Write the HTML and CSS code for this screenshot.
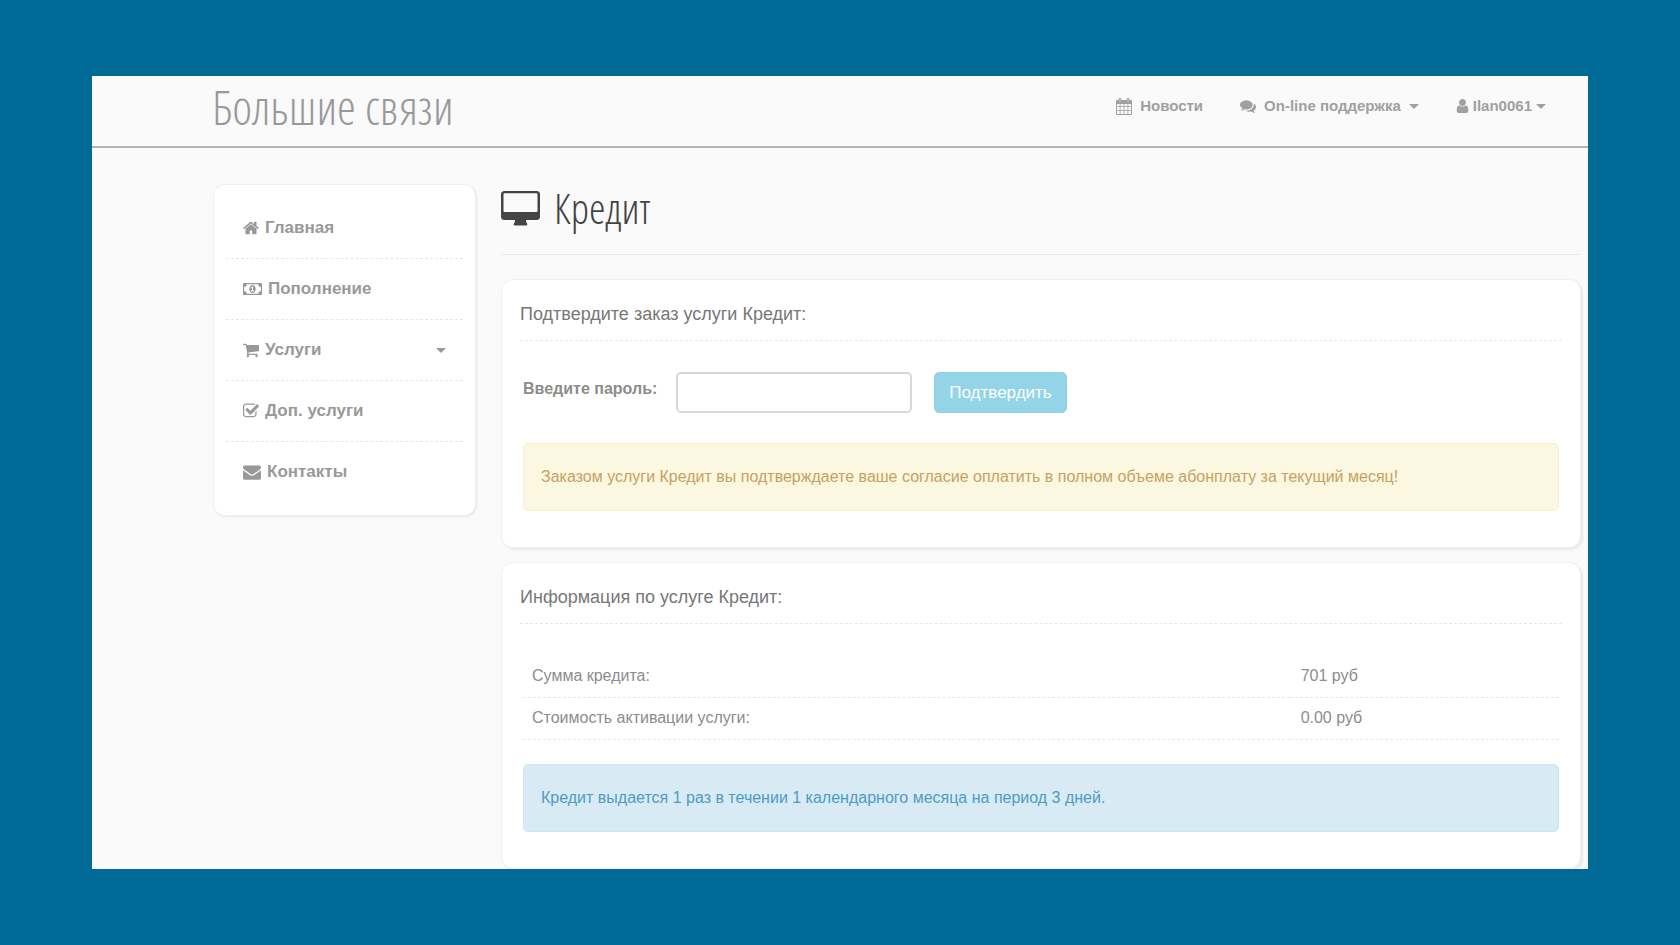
FILE: index.html
```html
<!DOCTYPE html>
<html lang="ru">
<head>
<meta charset="utf-8">
<title>Большие связи — Кредит</title>
<link rel="stylesheet" href="styles.css">
</head>
<body>
<div class="page">
  <header class="header">
    <a class="brand" href="#">Большие связи</a>
    <nav class="topnav">
      <a class="toplink" href="#">
        <svg class="icon icon-news" viewBox="0 0 16 18"><path fill-rule="evenodd" d="M1 3h14q1 0 1 1v13q0 1-1 1H1q-1 0-1-1V4q0-1 1-1zM1 7v2.200h2.700V7zM4.500 7v2.200h3.100V7zM8.400 7v2.200h3.100V7zM12.300 7v2.200H15V7zM1 10v3h2.700v-3zM4.500 10v3h3.100v-3zM8.400 10v3h3.100v-3zM12.300 10v3H15v-3zM1 13.800V17h2.700v-3.200zM4.500 13.800V17h3.100v-3.200zM8.400 13.800V17h3.100v-3.200zM12.300 13.800V17H15v-3.200z"/><rect x="2.700" y="1" width="2.600" height="4.400" rx="1"/><rect x="10.700" y="1" width="2.600" height="4.400" rx="1"/><path class="paper" d="M3.700 2h.6v2.600h-.6zM11.700 2h.6v2.600h-.6z"/></svg>
        <span>Новости</span>
      </a>
      <a class="toplink" href="#">
        <svg class="icon" viewBox="0 0 1792 1792"><path d="M1408 768q0 139-94 257t-256.500 186.500-353.500 68.500q-86 0-176-16-124 88-278 128-36 9-86 16h-3q-11 0-20.500-8t-11.500-21q-1-3-1-6.500t.5-6.500 2-6l2.500-5 3.500-5.500 4-5 4.500-5 4-4.500q5-6 23-25t26-29.500 22.500-29 25-38.500 20.500-44q-124-72-195-177t-71-224q0-139 94-257t256.500-186.500 353.500-68.500 353.500 68.500 256.500 186.500 94 257zm384 256q0 120-71 224.500t-195 176.500q10 24 20.500 44t25 38.500 22.500 29 26 29.500 23 25q1 1 4 4.500t4.500 5 4 5 3.500 5.500l2.500 5 2 6 .5 6.500-1 6.500q-3 14-13 22t-22 7q-50-7-86-16-154-40-278-128-90 16-176 16-271 0-472-132 58 4 88 4 161 0 309-45t264-129q125-92 192-212t67-254q0-77-23-152 129 71 204 178t75 230z"/></svg>
        <span>On-line поддержка</span>
        <i class="caret"></i>
      </a>
      <a class="toplink toplink-user" href="#">
        <svg class="icon icon-user" viewBox="192 128 1408 1536"><path d="M1536 1399q0 109-62.500 187t-150.500 78h-854q-88 0-150.500-78t-62.500-187q0-85 8.500-160.500t31.500-152 58.500-131 94-89 134.500-34.500q131 128 313 128t313-128q76 0 134.500 34.500t94 89 58.500 131 31.500 152 8.500 160.500zm-256-887q0 159-112.500 271.500t-271.500 112.500-271.500-112.500-112.500-271.500 112.500-271.500 271.500-112.500 271.500 112.500 112.500 271.500z"/></svg>
        <span>Ilan0061</span>
        <i class="caret"></i>
      </a>
    </nav>
  </header>

  <div class="layout">
    <nav class="sidebar">
      <a class="side-item" href="#">
        <svg class="icon" viewBox="64 0 1664 1792"><path d="M1472 992v480q0 26-19 45t-45 19h-384v-384h-256v384h-384q-26 0-45-19t-19-45v-480q0-1 .5-3t.5-3l575-474 575 474q1 2 1 6zm223-69l-62 74q-8 9-21 11h-3q-13 0-21-7l-692-577-692 577q-12 8-24 7-13-2-21-11l-62-74q-8-10-7-23.500t11-21.500l719-599q32-26 76-26t76 26l244 204v-195q0-14 9-23t23-9h192q14 0 23 9t9 23v408l219 182q10 8 11 21.500t-7 23.500z"/></svg>
        <span>Главная</span>
      </a>
      <a class="side-item" href="#">
        <svg class="icon icon-money" viewBox="0 0 19 18"><path fill-rule="evenodd" d="M.5 3h18q.5 0 .5.500v11q0 .5-.5.500H.5q-.5 0-.5-.5v-11Q0 3 .5 3zM3.800 4.200A2.600 2.600 0 0 1 1.200 6.800v4.400a2.600 2.600 0 0 1 2.600 2.600h11.400a2.600 2.600 0 0 1 2.600-2.600V6.800a2.600 2.600 0 0 1-2.600-2.600zM9.500 5c1.900 0 3.200 1.800 3.200 4s-1.300 4-3.200 4-3.200-1.800-3.200-4 1.300-4 3.200-4zm.5 1.600h-.9L7.700 7.800l.6.700.8-.6v2.600H8v1h3.200v-1H10z"/></svg>
        <span>Пополнение</span>
      </a>
      <a class="side-item" href="#">
        <svg class="icon" viewBox="64 0 1664 1792"><path d="M704 1536q0 52-38 90t-90 38-90-38-38-90 38-90 90-38 90 38 38 90zm896 0q0 52-38 90t-90 38-90-38-38-90 38-90 90-38 90 38 38 90zm128-1088v512q0 24-16.500 42.500t-40.500 21.500l-1044 122q13 60 13 70 0 16-24 64h920q26 0 45 19t19 45-19 45-45 19h-1024q-26 0-45-19t-19-45q0-11 8-31.500t16-36 21.500-40 15.500-29.500l-177-823h-204q-26 0-45-19t-19-45 19-45 45-19h256q16 0 28.500 6.500t19.500 15.500 13 24.500 8 26 5.500 29.500 4.500 26h1201q26 0 45 19t19 45z"/></svg>
        <span>Услуги</span>
        <i class="caret caret-side"></i>
      </a>
      <a class="side-item" href="#">
        <svg class="icon" viewBox="64 0 1664 1792"><path d="M1472 930v318q0 119-84.500 203.500t-203.500 84.500h-832q-119 0-203.500-84.500t-84.500-203.500v-832q0-119 84.500-203.500t203.500-84.500h832q63 0 117 25 15 7 18 23 3 17-9 29l-49 49q-10 10-23 10-3 0-9-2-23-6-45-6h-832q-66 0-113 47t-47 113v832q0 66 47 113t113 47h832q66 0 113-47t47-113v-254q0-13 9-22l64-64q10-10 23-10 6 0 12 3 20 8 20 29zm231-489l-814 814q-24 24-57 24t-57-24l-430-430q-24-24-24-57t24-57l110-110q24-24 57-24t57 24l263 263 647-647q24-24 57-24t57 24l110 110q24 24 24 57t-24 57z"/></svg>
        <span>Доп. услуги</span>
      </a>
      <a class="side-item" href="#">
        <svg class="icon icon-mail" viewBox="0 0 1792 1792"><path d="M1792 710v794q0 66-47 113t-113 47h-1472q-66 0-113-47t-47-113v-794q44 49 101 87 362 246 497 345 57 42 92.500 65.500t94.500 48 110 24.500h2q51 0 110-24.500t94.500-48 92.500-65.500q170-123 498-345 57-39 100-87zm0-294q0 79-49 151t-122 123q-376 261-468 325-10 7-42.500 31t-54 38.500-52 32.500-57.500 27-50 9h-2q-23 0-50-9t-57.500-27-52-32.500-54-38.500-42.500-31q-91-64-262-182.500t-205-142.500q-62-42-117-115.500t-55-136.500q0-78 41.500-130t118.500-52h1472q65 0 112.500 47t47.500 113z"/></svg>
        <span>Контакты</span>
      </a>
    </nav>

    <main class="main">
      <h1 class="title">
        <svg class="icon-desktop" viewBox="0 0 39 35"><path fill-rule="evenodd" d="M3.500 0h32Q39 0 39 3.500v22q0 3.500-3.500 3.500H25q0 2 1 3.500t-1 2H14q-2-.5-1-2t1-3.500H3.500Q0 29 0 25.500v-22Q0 0 3.500 0zm0 2.200q-1 0-1 1.300V20q0 1 1 1h32q1 0 1-1V3.500q0-1.300-1-1.300z"/></svg>
        <span>Кредит</span>
      </h1>

      <section class="panel">
        <h2 class="panel-title">Подтвердите заказ услуги Кредит:</h2>
        <div class="panel-body">
          <form class="form">
            <label class="form-label" for="password">Введите пароль:</label>
            <input class="form-input" id="password" type="password">
            <button class="form-button" type="button">Подтвердить</button>
          </form>
          <p class="alert alert-warning">Заказом услуги Кредит вы подтверждаете ваше согласие оплатить в полном объеме абонплату за текущий месяц!</p>
        </div>
      </section>

      <section class="panel">
        <h2 class="panel-title">Информация по услуге Кредит:</h2>
        <div class="panel-body">
          <table class="info">
            <tbody>
              <tr><td class="info-name">Сумма кредита:</td><td>701 руб</td></tr>
              <tr><td class="info-name">Стоимость активации услуги:</td><td>0.00 руб</td></tr>
            </tbody>
          </table>
          <p class="alert alert-info">Кредит выдается 1 раз в течении 1 календарного месяца на период 3 дней.</p>
        </div>
      </section>
    </main>
  </div>
</div>
</body>
</html>
```
FILE: styles.css
```css
* { box-sizing: border-box; }

body {
  margin: 0;
  min-height: 100vh;
  padding: 76px 92px;
  background: #006b96;
  color: #8c8c8c;
  font: 16px/22px "Liberation Sans", Arial, sans-serif;
}

a { color: #999; text-decoration: none; }

.page { background: #fafafa; }

.header {
  display: flex;
  justify-content: space-between;
  height: 72px;
  padding: 0 42px 0 120px;
  border-bottom: 2px solid #b4b4b4;
}

.brand {
  font: 300 48px/62px "Open Sans Condensed Light", "Open Sans CondLight", "Liberation Sans Narrow", sans-serif;
  color: #999;
}

.topnav { display: flex; gap: 37px; padding-top: 19px; }
.toplink {
  display: flex;
  align-items: center;
  gap: 8px;
  height: 22px;
  color: #a0a0a0;
  font-size: 15px;
  font-weight: bold;
}
.toplink-user { gap: 4px; }

.icon { flex: none; width: 16px; height: 18px; fill: currentColor; }
.icon-user { width: 13px; height: 14px; }
.icon-money { width: 19px; }
.icon-mail { width: 18px; height: 18px; }
.paper { fill: #fafafa; }

.caret {
  border: 5px solid transparent;
  border-top-color: currentColor;
  border-bottom-width: 0;
}
.caret-side { margin-left: auto; }

.layout {
  display: grid;
  grid-template-columns: 263px 1fr;
  align-items: start;
  gap: 25px;
  padding: 36px 7px 0 121px;
  overflow: hidden;
}

.sidebar {
  padding: 12px 12px 13px;
  border: 1px solid #f0f0f0;
  border-radius: 12px;
  background: #fff;
  box-shadow: 1px 1px 2px #e8e8e8;
}
.side-item {
  display: flex;
  align-items: center;
  gap: 6px;
  height: 61px;
  padding: 0 17px;
  font-size: 17px;
  font-weight: bold;
}
.side-item + .side-item { border-top: 1px dashed #e8e8e8; }

.title {
  display: flex;
  align-items: center;
  gap: 14px;
  height: 71px;
  margin: 0 0 24px;
  padding-bottom: 22px;
  border-bottom: 1px solid #eaeaea;
  color: #444;
  font: 300 42px/48px "Open Sans Condensed Light", "Open Sans CondLight", "Liberation Sans Narrow", sans-serif;
}
.icon-desktop { width: 39px; height: 35px; fill: currentColor; }

.panel {
  margin-bottom: 14px;
  padding: 0 18px 36px;
  border: 1px solid #f0f0f0;
  border-radius: 12px;
  background: #fff;
  box-shadow: 2px 2px 2px #eaeaea;
}
.panel:last-child { margin-bottom: 0; }

.panel-title {
  height: 61px;
  margin: 0;
  padding-top: 23px;
  border-bottom: 1px dashed #e8e8e8;
  color: #777;
  font-size: 18px;
  font-weight: normal;
}
.panel-body { padding: 31px 3px 0; }

.form { display: flex; }
.form-label { padding-top: 6px; font-weight: bold; }
.form-input {
  width: 236px;
  height: 41px;
  margin: 0 22px 0 19px;
  padding: 0 12px;
  border: 2px solid #d8d8d8;
  border-radius: 5px;
  background: #fff;
  font: inherit;
}
.form-button {
  height: 41px;
  padding: 0 14px;
  border: 1px solid #8dd3e6;
  border-radius: 5px;
  background: #93d4e7;
  color: #fff;
  font: inherit;
  font-size: 17px;
}

.alert {
  margin: 30px 0 0;
  padding: 22px 17px;
  border: 1px solid;
  border-radius: 5px;
}
.alert-warning { border-color: #faeed0; background: #fcf7e1; color: #c7a25e; }
.alert-info { margin-top: 24px; border-color: #c5eaf3; background: #d8ebf5; color: #4f9bc0; }

.info { width: 100%; border-collapse: collapse; }
.info td { height: 42px; padding: 0 11px; border-bottom: 1px dashed #e8e8e8; }
.info .info-name { width: 74%; padding: 0 9px; }
```
